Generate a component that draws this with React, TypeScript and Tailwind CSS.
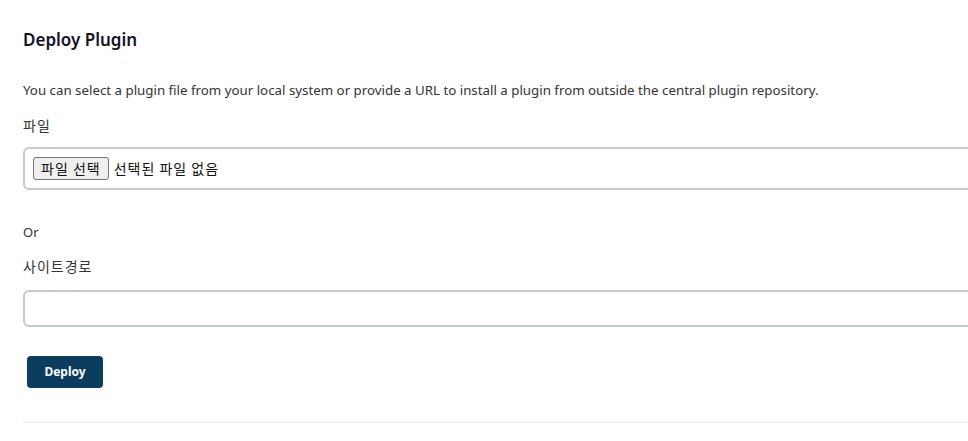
export default function App() {
  const kr = { fontFamily: '"Noto Sans CJK KR", sans-serif' };

  return (
    <div
      className="min-h-[441px] overflow-hidden bg-white text-[#333] pl-[23px]"
      style={{ fontFamily: '"Noto Sans", "Noto Sans CJK KR", sans-serif' }}
    >
      <div className="w-[1000px]">
        <h2 className="pt-[28px] text-[17px] font-semibold leading-[24px] text-[#14141f]">
          Deploy Plugin
        </h2>
        <p className="mt-[28px] text-[13.3px] leading-[20px]">
          You can select a plugin file from your local system or provide a URL to install a plugin from outside the
          central plugin repository.
        </p>
        <div className="mt-[15px] text-[14px] leading-[20px] tracking-[1px]" style={kr}>
          파일
        </div>
        <div
          className="mt-[12px] flex h-[43px] items-center rounded-[6px] border-2 border-[#c3cbd0] pl-[8px] text-[14px]"
          style={kr}
        >
          <span className="flex h-[23px] items-center rounded-[3px] border border-[#767676] bg-[#efefef] px-[7px] tracking-[1px] text-[#111]">
            파일 선택
          </span>
          <span className="ml-[5px] tracking-[1px] text-[#111]">선택된 파일 없음</span>
        </div>
        <div className="mt-[32px] text-[13px] leading-[20px]">Or</div>
        <div className="mt-[14px] text-[14px] leading-[20px] tracking-[1px]" style={kr}>
          사이트경로
        </div>
        <input
          type="text"
          className="mt-[14px] block h-[37px] w-full rounded-[6px] border-2 border-[#c3cbd0] bg-white px-2 text-[13px] outline-none"
        />
        <button
          type="button"
          className="ml-[4px] mt-[29px] flex h-[32px] w-[76px] items-center justify-center rounded-[4px] bg-[#0b3d5e] text-[12px] font-bold text-white"
        >
          Deploy
        </button>
        <div className="mt-[33px] h-[2px] bg-[#f1f2f4]" />
      </div>
    </div>
  );
}
